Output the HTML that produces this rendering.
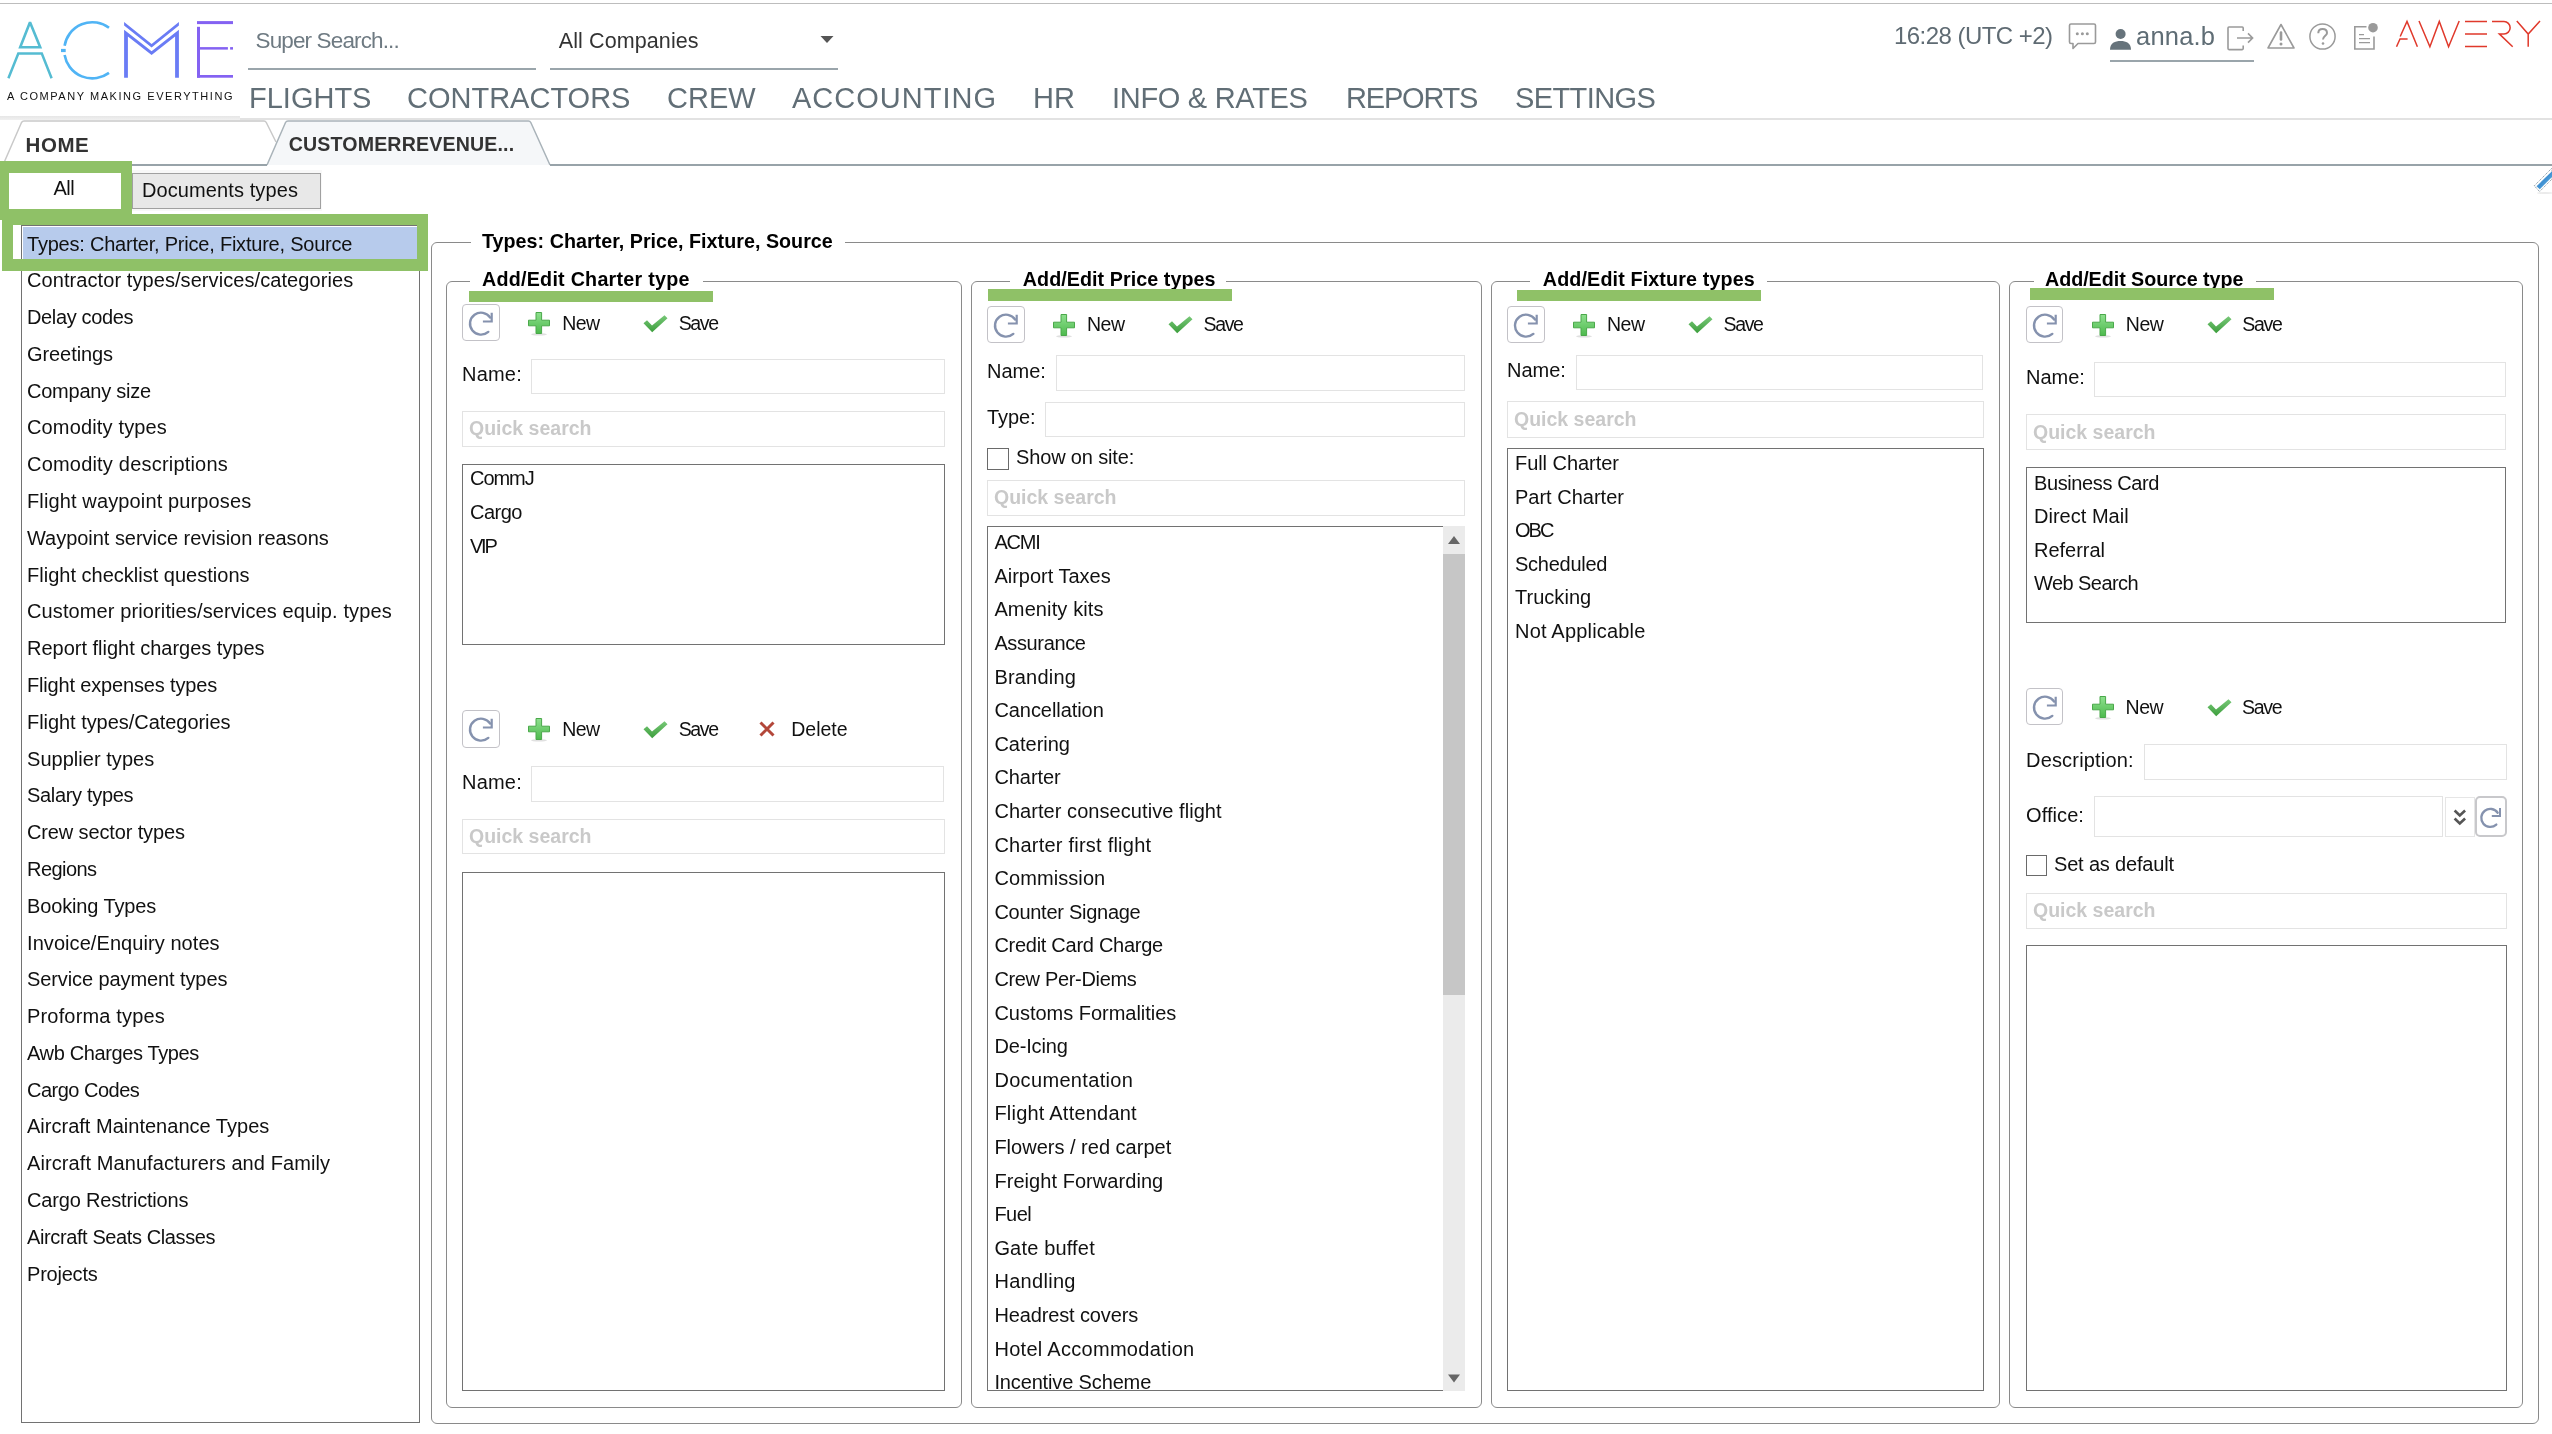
<!DOCTYPE html>
<html><head><meta charset="utf-8"><title>Types</title>
<style>
html,body{margin:0;padding:0;background:#fff;width:2552px;height:1434px;overflow:hidden;position:relative}
body{font-family:"Liberation Sans", sans-serif}
.a{position:absolute}
.t{position:absolute;line-height:1;white-space:nowrap}
body{-webkit-font-smoothing:antialiased}
</style></head><body><div id="root" style="position:absolute;left:0;top:0;width:2552px;height:1434px;will-change:transform">
<div class="a" style="left:0.0px;top:3.0px;width:2552.0px;height:1.0px;background:#bdbdbd"></div>
<svg class="a" style="left:0;top:0" width="240" height="120" viewBox="0 0 240 120">
<g fill="none" stroke-width="2.4" stroke-linecap="butt" stroke-linejoin="miter">
<path d="M30 22.3 L20.2 47.2 L40.2 47.2 Z" stroke="#55bcd2" stroke-width="2.6" stroke-miterlimit="1.85"/>
<path d="M8.4 78.3 L18.3 53.6 L41.8 53.6 L51.6 78.3" stroke="#55bcd2" stroke-width="2.5"/>
<path d="M109 27.7 A 28.1 28.1 0 0 0 64.6 45.8" stroke="#50b4f5" stroke-width="2.6"/>
<path d="M64.6 55 A 28.1 28.1 0 0 0 109 72.9" stroke="#50b4f5" stroke-width="2.6"/>

</g>
<rect x="61" y="48.9" width="4.7" height="3.2" fill="#50b4f5"/>
<path d="M124.1 21.9 L151.6 43.9 L178.9 21.9 L178.9 25.5 L151.6 47.4 L124.1 25.5 Z" fill="#6a7cf5"/>
<path d="M124.1 77.7 L124.1 29.7 L151.6 51.2 L178.9 29.7 L178.9 77.7 L175.1 77.7 L175.1 36.6 L151.6 55.1 L127.9 36.6 L127.9 77.7 Z" fill="#6a7cf5"/>
<rect x="197" y="21.1" width="36" height="3" fill="#8462f2"/>
<rect x="197" y="26.8" width="3" height="50.9" fill="#8462f2"/>
<rect x="197" y="47.1" width="30.9" height="2.5" fill="#8462f2"/>
<rect x="230.1" y="47.1" width="2.9" height="2.5" fill="#8462f2"/>
<rect x="197" y="75" width="36" height="2.7" fill="#8462f2"/>
</svg>
<div class="t" style="left:7.00px;top:90.9px;font-size:11px;font-weight:400;color:#111;letter-spacing:1.55px;">A COMPANY MAKING EVERYTHING</div>
<div class="a" style="left:0.0px;top:116.0px;width:240.0px;height:3.8px;background:linear-gradient(#e6e6e6,#f0f0f0)"></div>
<div class="t" style="left:255.50px;top:29.5px;font-size:22.5px;font-weight:400;color:#6e7a82;letter-spacing:-0.864px;">Super Search...</div>
<div class="a" style="left:248.0px;top:68.0px;width:288.0px;height:2.0px;background:#9aa5ab"></div>
<div class="t" style="left:558.80px;top:30.8px;font-size:21.5px;font-weight:400;color:#333;letter-spacing:0.100px;">All Companies</div>
<svg class="a" style="left:819px;top:35px" width="16" height="9"><path d="M1.5 1 L14.5 1 L8 8 Z" fill="#555"/></svg>
<div class="a" style="left:550.0px;top:68.0px;width:288.0px;height:2.0px;background:#9aa5ab"></div>
<div class="t" style="left:249.00px;top:83.8px;font-size:29px;font-weight:400;color:#616e76;letter-spacing:0px;">FLIGHTS</div>
<div class="t" style="left:407.00px;top:83.8px;font-size:29px;font-weight:400;color:#616e76;letter-spacing:0px;">CONTRACTORS</div>
<div class="t" style="left:667.00px;top:83.8px;font-size:29px;font-weight:400;color:#616e76;letter-spacing:0px;">CREW</div>
<div class="t" style="left:792.00px;top:83.8px;font-size:29px;font-weight:400;color:#616e76;letter-spacing:1.0px;">ACCOUNTING</div>
<div class="t" style="left:1033.00px;top:83.8px;font-size:29px;font-weight:400;color:#616e76;letter-spacing:0px;">HR</div>
<div class="t" style="left:1112.00px;top:83.8px;font-size:29px;font-weight:400;color:#616e76;letter-spacing:-0.3px;">INFO &amp; RATES</div>
<div class="t" style="left:1346.00px;top:83.8px;font-size:29px;font-weight:400;color:#616e76;letter-spacing:-1.2px;">REPORTS</div>
<div class="t" style="left:1515.00px;top:83.8px;font-size:29px;font-weight:400;color:#616e76;letter-spacing:-0.6px;">SETTINGS</div>
<div class="a" style="left:240.0px;top:118.0px;width:2312.0px;height:2.0px;background:#e2e2e2"></div>
<div class="t" style="left:1894.00px;top:24.2px;font-size:24px;font-weight:400;color:#5f6b73;letter-spacing:-0.538px;">16:28 (UTC +2)</div>
<svg class="a" style="left:2066px;top:20px" width="34" height="32" viewBox="0 0 34 32">
<path d="M5 4 H28 Q29.5 4 29.5 5.5 V22 Q29.5 23.5 28 23.5 H12 L7 28.5 V23.5 H5 Q3.5 23.5 3.5 22 V5.5 Q3.5 4 5 4 Z" fill="none" stroke="#9a9a9a" stroke-width="1.6" stroke-linejoin="round"/>
<circle cx="11.3" cy="13.8" r="1.5" fill="#9a9a9a"/><circle cx="16.4" cy="13.8" r="1.5" fill="#9a9a9a"/><circle cx="21.3" cy="13.8" r="1.5" fill="#9a9a9a"/>
</svg>
<svg class="a" style="left:2108px;top:22px" width="26" height="30" viewBox="0 0 26 30">
<circle cx="12.6" cy="12" r="5" fill="#66737b"/>
<path d="M2 27.8 C2 21 7 19 12.6 19 C18 19 23 21 23 27.8 Z" fill="#66737b"/>
</svg>
<div class="t" style="left:2136.00px;top:24.4px;font-size:25.5px;font-weight:400;color:#5f6d75;letter-spacing:0.200px;">anna.b</div>
<div class="a" style="left:2110.0px;top:60.0px;width:144.0px;height:2.0px;background:#9aa5ab"></div>
<svg class="a" style="left:2224px;top:22px" width="34" height="32" viewBox="0 0 34 32">
<path d="M19.2 9 V6 Q19.2 5 18.2 5 H5 Q4 5 4 6 V26.6 Q4 27.6 5 27.6 H18.2 Q19.2 27.6 19.2 26.6 V23.5" fill="none" stroke="#9a9a9a" stroke-width="1.6" stroke-linejoin="round"/>
<path d="M13 16 H28.6 M24 11.4 L28.6 16 L24 20.6" fill="none" stroke="#9a9a9a" stroke-width="1.6"/>
</svg>
<svg class="a" style="left:2265px;top:21px" width="32" height="30" viewBox="0 0 32 30">
<path d="M16 3.5 L29 27 H3 Z" fill="none" stroke="#9a9a9a" stroke-width="1.6" stroke-linejoin="round"/>
<path d="M16 11.5 V18.5" stroke="#9a9a9a" stroke-width="2.6" stroke-linecap="round"/>
<circle cx="16" cy="23" r="1.5" fill="#9a9a9a"/>
</svg>
<svg class="a" style="left:2306px;top:20px" width="34" height="34" viewBox="0 0 34 34">
<circle cx="16.5" cy="16.5" r="12.6" fill="none" stroke="#9a9a9a" stroke-width="1.5"/>
<path d="M12.3 13.3 C12.3 10.5 14.3 9 16.6 9 C19.2 9 21 10.6 21 12.9 C21 15.6 17 16 17 19.5" fill="none" stroke="#9a9a9a" stroke-width="2"/>
<circle cx="17" cy="23.5" r="1.3" fill="#9a9a9a"/>
</svg>
<svg class="a" style="left:2350px;top:20px" width="32" height="34" viewBox="0 0 32 34">
<path d="M16.5 6.8 H4.8 V29 H24 V16.5" fill="none" stroke="#9a9a9a" stroke-width="1.6"/>
<path d="M9 14.6 H14 M9 18.6 H20 M9 22.6 H20" stroke="#9a9a9a" stroke-width="1.3"/>
<circle cx="23" cy="7.7" r="4.8" fill="#9a9a9a"/>
</svg>
<svg class="a" style="left:2390px;top:15px" width="160" height="40" viewBox="2390 15 160 40">
<g fill="none" stroke="#e0392b" stroke-width="1.5">
<path d="M2400.2 36.5 L2407 21.5 L2417.4 46.7"/>
<path d="M2396.5 46.7 L2400 39 L2407.6 39"/>
<path d="M2419 21 L2429.9 46.7 L2439.3 21.5 L2448.6 46.7 L2459.2 21"/>
<path d="M2465 21.6 H2487 M2465 33.9 H2487 M2465 46.4 H2487"/>
<path d="M2492 21.6 H2504 A6.15 6.15 0 0 1 2504 33.9 H2499.3 L2512.7 46.7"/>
<path d="M2516.8 21 L2528.2 34 L2540 21 M2528.2 34 V46.7"/>
</g></svg>
<svg class="a" style="left:0;top:118px" width="2552" height="50" viewBox="0 118 2552 50">
<path d="M3 165 L21.5 122.5 Q22.5 121 24 121 L264 121 Q265.5 121 266.3 122.5 L276 142" fill="#fff" stroke="#c9c9c9" stroke-width="1.5"/>
<path d="M267 165 L285.5 122.5 Q286.3 121 288 121 L528.5 121 Q530 121 530.8 122.5 L550 165" fill="#f5f7f9" stroke="#a9b3b9" stroke-width="1.5"/>
<path d="M0 165 L267 165 M550 165 L2552 165" stroke="#98a3a9" stroke-width="2"/>
</svg>
<div class="t" style="left:25.60px;top:134.5px;font-size:20.5px;font-weight:700;color:#333;letter-spacing:0.567px;">HOME</div>
<div class="t" style="left:288.70px;top:135.4px;font-size:19.6px;font-weight:700;color:#333;letter-spacing:0.153px;">CUSTOMERREVENUE...</div>
<svg class="a" style="left:2530px;top:164px" width="22" height="32" viewBox="2530 164 22 32">
<defs><linearGradient id="pb" x1="0" y1="0" x2="1" y2="1"><stop offset="0" stop-color="#7cc8f0"/><stop offset="0.5" stop-color="#3f8fd0"/><stop offset="1" stop-color="#6cc0f0"/></linearGradient></defs>
<path d="M2534.3 185.8 L2552 168 L2552 179 L2539.6 191.6 Z" fill="#fff" stroke="#8a9aa2" stroke-width="1" stroke-dasharray="1.2 0.9"/>
<path d="M2536.5 186.2 L2552 171.3 L2552 177 L2539.8 189.3 Z" fill="url(#pb)"/>
<ellipse cx="2545" cy="193" rx="8" ry="1" fill="#ddd" opacity="0.6"/>
</svg>
<div class="a" style="left:132.0px;top:170.0px;width:190.0px;height:41.0px;background:#f8f8f8"></div>
<div class="a" style="left:132.0px;top:172.8px;width:188.5px;height:36.0px;background:#e8e8e8;border:1px solid #a0a0a0;box-sizing:border-box"></div>
<div class="t" style="left:142.00px;top:180.1px;font-size:20px;font-weight:400;color:#111;letter-spacing:0.100px;">Documents types</div>
<div class="a" style="left:9.0px;top:173.0px;width:111.3px;height:35.0px;background:#fff"></div>
<div class="t" style="left:53.40px;top:178.1px;font-size:20px;font-weight:400;color:#111;letter-spacing:-0.400px;">All</div>
<div class="a" style="left:21.0px;top:225.4px;width:399.0px;height:1197.6px;border:1.6px solid #727272;box-sizing:border-box;background:transparent"></div>
<div class="a" style="left:22.5px;top:227.0px;width:394.5px;height:32.0px;background:#b7cbec"></div>
<div class="t" style="left:27.00px;top:233.5px;font-size:20px;font-weight:400;color:#111;letter-spacing:-0.216px;">Types: Charter, Price, Fixture, Source</div>
<div class="t" style="left:27.00px;top:270.3px;font-size:20px;font-weight:400;color:#111;letter-spacing:0.077px;">Contractor types/services/categories</div>
<div class="t" style="left:27.00px;top:307.1px;font-size:20px;font-weight:400;color:#111;letter-spacing:-0.350px;">Delay codes</div>
<div class="t" style="left:27.00px;top:343.8px;font-size:20px;font-weight:400;color:#111;letter-spacing:-0.075px;">Greetings</div>
<div class="t" style="left:27.00px;top:380.6px;font-size:20px;font-weight:400;color:#111;letter-spacing:-0.227px;">Company size</div>
<div class="t" style="left:27.00px;top:417.4px;font-size:20px;font-weight:400;color:#111;letter-spacing:0.154px;">Comodity types</div>
<div class="t" style="left:27.00px;top:454.2px;font-size:20px;font-weight:400;color:#111;letter-spacing:0.200px;">Comodity descriptions</div>
<div class="t" style="left:27.00px;top:491.0px;font-size:20px;font-weight:400;color:#111;letter-spacing:0.130px;">Flight waypoint purposes</div>
<div class="t" style="left:27.00px;top:527.8px;font-size:20px;font-weight:400;color:#111;letter-spacing:-0.031px;">Waypoint service revision reasons</div>
<div class="t" style="left:27.00px;top:564.6px;font-size:20px;font-weight:400;color:#111;letter-spacing:0.008px;">Flight checklist questions</div>
<div class="t" style="left:27.00px;top:601.4px;font-size:20px;font-weight:400;color:#111;letter-spacing:0.113px;">Customer priorities/services equip. types</div>
<div class="t" style="left:27.00px;top:638.2px;font-size:20px;font-weight:400;color:#111;letter-spacing:-0.012px;">Report flight charges types</div>
<div class="t" style="left:27.00px;top:675.0px;font-size:20px;font-weight:400;color:#111;letter-spacing:-0.165px;">Flight expenses types</div>
<div class="t" style="left:27.00px;top:711.7px;font-size:20px;font-weight:400;color:#111;letter-spacing:-0.045px;">Flight types/Categories</div>
<div class="t" style="left:27.00px;top:748.5px;font-size:20px;font-weight:400;color:#111;letter-spacing:0.038px;">Supplier types</div>
<div class="t" style="left:27.00px;top:785.3px;font-size:20px;font-weight:400;color:#111;letter-spacing:-0.318px;">Salary types</div>
<div class="t" style="left:27.00px;top:822.1px;font-size:20px;font-weight:400;color:#111;letter-spacing:-0.131px;">Crew sector types</div>
<div class="t" style="left:27.00px;top:858.9px;font-size:20px;font-weight:400;color:#111;letter-spacing:-0.550px;">Regions</div>
<div class="t" style="left:27.00px;top:895.7px;font-size:20px;font-weight:400;color:#111;letter-spacing:-0.133px;">Booking Types</div>
<div class="t" style="left:27.00px;top:932.5px;font-size:20px;font-weight:400;color:#111;letter-spacing:0.070px;">Invoice/Enquiry notes</div>
<div class="t" style="left:27.00px;top:969.3px;font-size:20px;font-weight:400;color:#111;letter-spacing:-0.095px;">Service payment types</div>
<div class="t" style="left:27.00px;top:1006.1px;font-size:20px;font-weight:400;color:#111;letter-spacing:0.169px;">Proforma types</div>
<div class="t" style="left:27.00px;top:1042.8px;font-size:20px;font-weight:400;color:#111;letter-spacing:-0.369px;">Awb Charges Types</div>
<div class="t" style="left:27.00px;top:1079.6px;font-size:20px;font-weight:400;color:#111;letter-spacing:-0.510px;">Cargo Codes</div>
<div class="t" style="left:27.00px;top:1116.4px;font-size:20px;font-weight:400;color:#111;letter-spacing:0.012px;">Aircraft Maintenance Types</div>
<div class="t" style="left:27.00px;top:1153.2px;font-size:20px;font-weight:400;color:#111;letter-spacing:0.091px;">Aircraft Manufacturers and Family</div>
<div class="t" style="left:27.00px;top:1190.0px;font-size:20px;font-weight:400;color:#111;letter-spacing:-0.176px;">Cargo Restrictions</div>
<div class="t" style="left:27.00px;top:1226.8px;font-size:20px;font-weight:400;color:#111;letter-spacing:-0.390px;">Aircraft Seats Classes</div>
<div class="t" style="left:27.00px;top:1263.6px;font-size:20px;font-weight:400;color:#111;letter-spacing:-0.214px;">Projects</div>
<div class="a" style="left:0.0px;top:161.0px;width:132.0px;height:58.5px;border:solid #8fc167;border-width:12px 11.7px 11.5px 9px;box-sizing:border-box"></div>
<div class="a" style="left:2.4px;top:213.8px;width:425.6px;height:57.2px;border:solid #8fc167;border-width:11.3px 11px 12px 11.6px;box-sizing:border-box"></div>
<div class="a" style="left:0.0px;top:207.5px;width:9.0px;height:12.0px;background:#8fc167"></div>
<div class="a" style="left:430.5px;top:242.0px;width:2108.5px;height:1182.0px;border:1.4px solid #8a8a8a;border-radius:6px;box-sizing:border-box"></div>
<div class="a" style="left:470.5px;top:240.0px;width:374.1px;height:5.0px;background:#fff"></div>
<div class="t" style="left:482.00px;top:231.9px;font-size:19.7px;font-weight:700;color:#000;letter-spacing:0.027px;">Types: Charter, Price, Fixture, Source</div>
<div class="a" style="left:446.0px;top:280.8px;width:515.5px;height:1127.5px;border:1.4px solid #8a8a8a;border-radius:6px;box-sizing:border-box"></div>
<div class="a" style="left:470.0px;top:278.8px;width:233.0px;height:5.0px;background:#fff"></div>
<div class="t" style="left:482.00px;top:269.7px;font-size:19.7px;font-weight:700;color:#000;letter-spacing:0.250px;">Add/Edit Charter type</div>
<div class="a" style="left:469.2px;top:290.5px;width:243.8px;height:11.4px;background:#8fc167"></div>
<div class="a" style="left:462.2px;top:304.0px;width:37.5px;height:37.3px;border:1.5px solid #c3c2c7;border-radius:4px;box-sizing:border-box;background:#fff"></div>
<svg class="a" style="left:462.2px;top:304.0px" width="37.5" height="37.3" viewBox="0 0 37.5 37.3"><path d="M28.2 13.6 A 11 11 0 1 0 26.3 27.9" fill="none" stroke="#8592ae" stroke-width="2.4" stroke-linecap="round"/><path d="M20.9 17.5 H29.7 V8.7" fill="none" stroke="#8592ae" stroke-width="2.2"/></svg>
<svg class="a" style="left:528.2px;top:312.0px" width="24" height="24" viewBox="0 0 24 24">
<defs><linearGradient id="pg" x1="0" y1="0" x2="0" y2="1"><stop offset="0" stop-color="#8ee08e"/><stop offset="1" stop-color="#4dba4d"/></linearGradient></defs>
<ellipse cx="11" cy="22.3" rx="8" ry="1.2" fill="#ccc" opacity="0.6"/>
<path d="M8 0.5 H13.6 V8.2 H21.5 V13.8 H13.6 V21.5 H8 V13.8 H0.5 V8.2 H8 Z" fill="url(#pg)" stroke="#4aa84a" stroke-width="1"/>
</svg>
<div class="t" style="left:562.20px;top:313.7px;font-size:19.5px;font-weight:400;color:#111;letter-spacing:-0.500px;">New</div>
<svg class="a" style="left:643.2px;top:314.5px" width="26" height="20" viewBox="0 0 26 20">
<defs><linearGradient id="cg" x1="0" y1="0" x2="0" y2="1"><stop offset="0" stop-color="#78c878"/><stop offset="1" stop-color="#3c9e3c"/></linearGradient></defs>
<path d="M0.5 8.3 L4 5.3 L9 10.5 L21.5 0.3 L24.5 3.3 L9.2 17.3 Z" fill="url(#cg)"/>
</svg>
<div class="t" style="left:678.70px;top:313.7px;font-size:19.5px;font-weight:400;color:#111;letter-spacing:-1.333px;">Save</div>
<div class="t" style="left:462.00px;top:363.9px;font-size:20px;font-weight:400;color:#111;letter-spacing:0.200px;">Name:</div>
<div class="a" style="left:531.0px;top:358.5px;width:413.5px;height:35.5px;border:1.5px solid #e3e3e3;box-sizing:border-box;background:#fff"></div>
<div class="a" style="left:462.0px;top:411.0px;width:482.5px;height:35.5px;border:1.5px solid #e3e3e3;box-sizing:border-box;background:#fff"></div>
<div class="t" style="left:469.00px;top:419.2px;font-size:19.5px;font-weight:700;color:#c9c9c9;letter-spacing:0.000px;">Quick search</div>
<div class="a" style="left:462.0px;top:463.5px;width:482.5px;height:181.5px;border:1.6px solid #727272;box-sizing:border-box"></div>
<div class="t" style="left:470.00px;top:468.3px;font-size:20px;font-weight:400;color:#111;letter-spacing:-1.050px;">CommJ</div>
<div class="t" style="left:470.00px;top:502.2px;font-size:20px;font-weight:400;color:#111;letter-spacing:-0.500px;">Cargo</div>
<div class="t" style="left:470.00px;top:536.1px;font-size:20px;font-weight:400;color:#111;letter-spacing:-2.250px;">VIP</div>
<div class="a" style="left:462.2px;top:710.4px;width:37.5px;height:37.3px;border:1.5px solid #c3c2c7;border-radius:4px;box-sizing:border-box;background:#fff"></div>
<svg class="a" style="left:462.2px;top:710.4px" width="37.5" height="37.3" viewBox="0 0 37.5 37.3"><path d="M28.2 13.6 A 11 11 0 1 0 26.3 27.9" fill="none" stroke="#8592ae" stroke-width="2.4" stroke-linecap="round"/><path d="M20.9 17.5 H29.7 V8.7" fill="none" stroke="#8592ae" stroke-width="2.2"/></svg>
<svg class="a" style="left:528.2px;top:718.4px" width="24" height="24" viewBox="0 0 24 24">
<defs><linearGradient id="pg" x1="0" y1="0" x2="0" y2="1"><stop offset="0" stop-color="#8ee08e"/><stop offset="1" stop-color="#4dba4d"/></linearGradient></defs>
<ellipse cx="11" cy="22.3" rx="8" ry="1.2" fill="#ccc" opacity="0.6"/>
<path d="M8 0.5 H13.6 V8.2 H21.5 V13.8 H13.6 V21.5 H8 V13.8 H0.5 V8.2 H8 Z" fill="url(#pg)" stroke="#4aa84a" stroke-width="1"/>
</svg>
<div class="t" style="left:562.20px;top:720.1px;font-size:19.5px;font-weight:400;color:#111;letter-spacing:-0.500px;">New</div>
<svg class="a" style="left:643.2px;top:720.9px" width="26" height="20" viewBox="0 0 26 20">
<defs><linearGradient id="cg" x1="0" y1="0" x2="0" y2="1"><stop offset="0" stop-color="#78c878"/><stop offset="1" stop-color="#3c9e3c"/></linearGradient></defs>
<path d="M0.5 8.3 L4 5.3 L9 10.5 L21.5 0.3 L24.5 3.3 L9.2 17.3 Z" fill="url(#cg)"/>
</svg>
<div class="t" style="left:678.70px;top:720.1px;font-size:19.5px;font-weight:400;color:#111;letter-spacing:-1.333px;">Save</div>
<svg class="a" style="left:758.7px;top:721.4px" width="16" height="16" viewBox="0 0 16 16">
<path d="M1.5 1.5 L14.5 14.5 M14.5 1.5 L1.5 14.5" stroke="#b3473a" stroke-width="3"/>
</svg>
<div class="t" style="left:791.20px;top:720.1px;font-size:19.5px;font-weight:400;color:#111;letter-spacing:0.020px;">Delete</div>
<div class="t" style="left:462.00px;top:771.9px;font-size:20px;font-weight:400;color:#111;letter-spacing:0.200px;">Name:</div>
<div class="a" style="left:531.4px;top:766.4px;width:413.1px;height:35.6px;border:1.5px solid #e3e3e3;box-sizing:border-box;background:#fff"></div>
<div class="a" style="left:462.0px;top:819.3px;width:482.5px;height:35.1px;border:1.5px solid #e3e3e3;box-sizing:border-box;background:#fff"></div>
<div class="t" style="left:469.00px;top:827.3px;font-size:19.5px;font-weight:700;color:#c9c9c9;letter-spacing:0.000px;">Quick search</div>
<div class="a" style="left:462.0px;top:871.5px;width:482.5px;height:519.7px;border:1.6px solid #727272;box-sizing:border-box"></div>
<div class="a" style="left:970.5px;top:280.8px;width:511.0px;height:1127.5px;border:1.4px solid #8a8a8a;border-radius:6px;box-sizing:border-box"></div>
<div class="a" style="left:1010.0px;top:278.8px;width:216.0px;height:5.0px;background:#fff"></div>
<div class="t" style="left:1022.80px;top:269.7px;font-size:19.7px;font-weight:700;color:#000;letter-spacing:0.063px;">Add/Edit Price types</div>
<div class="a" style="left:988.0px;top:289.2px;width:243.6px;height:11.5px;background:#8fc167"></div>
<div class="a" style="left:987.0px;top:305.7px;width:37.5px;height:37.3px;border:1.5px solid #c3c2c7;border-radius:4px;box-sizing:border-box;background:#fff"></div>
<svg class="a" style="left:987.0px;top:305.7px" width="37.5" height="37.3" viewBox="0 0 37.5 37.3"><path d="M28.2 13.6 A 11 11 0 1 0 26.3 27.9" fill="none" stroke="#8592ae" stroke-width="2.4" stroke-linecap="round"/><path d="M20.9 17.5 H29.7 V8.7" fill="none" stroke="#8592ae" stroke-width="2.2"/></svg>
<svg class="a" style="left:1053.0px;top:313.7px" width="24" height="24" viewBox="0 0 24 24">
<defs><linearGradient id="pg" x1="0" y1="0" x2="0" y2="1"><stop offset="0" stop-color="#8ee08e"/><stop offset="1" stop-color="#4dba4d"/></linearGradient></defs>
<ellipse cx="11" cy="22.3" rx="8" ry="1.2" fill="#ccc" opacity="0.6"/>
<path d="M8 0.5 H13.6 V8.2 H21.5 V13.8 H13.6 V21.5 H8 V13.8 H0.5 V8.2 H8 Z" fill="url(#pg)" stroke="#4aa84a" stroke-width="1"/>
</svg>
<div class="t" style="left:1087.00px;top:315.4px;font-size:19.5px;font-weight:400;color:#111;letter-spacing:-0.500px;">New</div>
<svg class="a" style="left:1168.0px;top:316.2px" width="26" height="20" viewBox="0 0 26 20">
<defs><linearGradient id="cg" x1="0" y1="0" x2="0" y2="1"><stop offset="0" stop-color="#78c878"/><stop offset="1" stop-color="#3c9e3c"/></linearGradient></defs>
<path d="M0.5 8.3 L4 5.3 L9 10.5 L21.5 0.3 L24.5 3.3 L9.2 17.3 Z" fill="url(#cg)"/>
</svg>
<div class="t" style="left:1203.50px;top:315.4px;font-size:19.5px;font-weight:400;color:#111;letter-spacing:-1.333px;">Save</div>
<div class="t" style="left:987.00px;top:360.9px;font-size:20px;font-weight:400;color:#111;">Name:</div>
<div class="a" style="left:1056.0px;top:355.4px;width:408.6px;height:35.6px;border:1.5px solid #e3e3e3;box-sizing:border-box;background:#fff"></div>
<div class="t" style="left:987.00px;top:407.4px;font-size:20px;font-weight:400;color:#111;letter-spacing:-0.100px;">Type:</div>
<div class="a" style="left:1044.6px;top:401.9px;width:420.0px;height:35.6px;border:1.5px solid #e3e3e3;box-sizing:border-box;background:#fff"></div>
<div class="a" style="left:987.0px;top:448.0px;width:22.0px;height:21.6px;border:1.4px solid #6a6a6a;box-sizing:border-box;background:#fff"></div>
<div class="t" style="left:1016.00px;top:447.0px;font-size:20px;font-weight:400;color:#111;letter-spacing:-0.150px;">Show on site:</div>
<div class="a" style="left:987.0px;top:480.0px;width:477.6px;height:35.6px;border:1.5px solid #e3e3e3;box-sizing:border-box;background:#fff"></div>
<div class="t" style="left:994.00px;top:488.3px;font-size:19.5px;font-weight:700;color:#c9c9c9;letter-spacing:0.000px;">Quick search</div>
<div class="a" style="left:986.9px;top:526px;width:456.1px;height:865.2px;overflow:hidden;border:1.6px solid #727272;border-right:none;box-sizing:border-box">
<div class="t" style="left:6.50px;top:5.2px;font-size:20px;font-weight:400;color:#111;letter-spacing:-1.167px;">ACMI</div>
<div class="t" style="left:6.50px;top:38.8px;font-size:20px;font-weight:400;color:#111;letter-spacing:-0.008px;">Airport Taxes</div>
<div class="t" style="left:6.50px;top:72.4px;font-size:20px;font-weight:400;color:#111;letter-spacing:0.118px;">Amenity kits</div>
<div class="t" style="left:6.50px;top:106.0px;font-size:20px;font-weight:400;color:#111;letter-spacing:-0.375px;">Assurance</div>
<div class="t" style="left:6.50px;top:139.6px;font-size:20px;font-weight:400;color:#111;letter-spacing:0.200px;">Branding</div>
<div class="t" style="left:6.50px;top:173.2px;font-size:20px;font-weight:400;color:#111;letter-spacing:-0.064px;">Cancellation</div>
<div class="t" style="left:6.50px;top:206.8px;font-size:20px;font-weight:400;color:#111;letter-spacing:0.000px;">Catering</div>
<div class="t" style="left:6.50px;top:240.4px;font-size:20px;font-weight:400;color:#111;letter-spacing:-0.050px;">Charter</div>
<div class="t" style="left:6.50px;top:274.0px;font-size:20px;font-weight:400;color:#111;letter-spacing:0.060px;">Charter consecutive flight</div>
<div class="t" style="left:6.50px;top:307.6px;font-size:20px;font-weight:400;color:#111;letter-spacing:0.232px;">Charter first flight</div>
<div class="t" style="left:6.50px;top:341.2px;font-size:20px;font-weight:400;color:#111;letter-spacing:0.089px;">Commission</div>
<div class="t" style="left:6.50px;top:374.8px;font-size:20px;font-weight:400;color:#111;letter-spacing:-0.271px;">Counter Signage</div>
<div class="t" style="left:6.50px;top:408.4px;font-size:20px;font-weight:400;color:#111;letter-spacing:-0.276px;">Credit Card Charge</div>
<div class="t" style="left:6.50px;top:442.0px;font-size:20px;font-weight:400;color:#111;letter-spacing:-0.331px;">Crew Per-Diems</div>
<div class="t" style="left:6.50px;top:475.6px;font-size:20px;font-weight:400;color:#111;letter-spacing:-0.017px;">Customs Formalities</div>
<div class="t" style="left:6.50px;top:509.2px;font-size:20px;font-weight:400;color:#111;letter-spacing:-0.157px;">De-Icing</div>
<div class="t" style="left:6.50px;top:542.8px;font-size:20px;font-weight:400;color:#111;letter-spacing:0.333px;">Documentation</div>
<div class="t" style="left:6.50px;top:576.4px;font-size:20px;font-weight:400;color:#111;letter-spacing:0.220px;">Flight Attendant</div>
<div class="t" style="left:6.50px;top:610.0px;font-size:20px;font-weight:400;color:#111;letter-spacing:0.005px;">Flowers / red carpet</div>
<div class="t" style="left:6.50px;top:643.6px;font-size:20px;font-weight:400;color:#111;letter-spacing:0.059px;">Freight Forwarding</div>
<div class="t" style="left:6.50px;top:677.2px;font-size:20px;font-weight:400;color:#111;letter-spacing:-0.533px;">Fuel</div>
<div class="t" style="left:6.50px;top:710.8px;font-size:20px;font-weight:400;color:#111;letter-spacing:0.170px;">Gate buffet</div>
<div class="t" style="left:6.50px;top:744.4px;font-size:20px;font-weight:400;color:#111;letter-spacing:0.300px;">Handling</div>
<div class="t" style="left:6.50px;top:778.0px;font-size:20px;font-weight:400;color:#111;letter-spacing:-0.129px;">Headrest covers</div>
<div class="t" style="left:6.50px;top:811.6px;font-size:20px;font-weight:400;color:#111;letter-spacing:0.294px;">Hotel Accommodation</div>
<div class="t" style="left:6.50px;top:845.2px;font-size:20px;font-weight:400;color:#111;letter-spacing:-0.140px;">Incentive Scheme</div>
</div>
<div class="a" style="left:1443.0px;top:526.0px;width:22.0px;height:865.0px;background:#ebebeb"></div>
<div class="a" style="left:1443.0px;top:554.0px;width:22.0px;height:441.0px;background:#c6c6c6"></div>
<svg class="a" style="left:1443px;top:526px" width="22" height="28"><path d="M5 17.9 L17 17.9 L11 9.9 Z" fill="#666"/></svg>
<svg class="a" style="left:1443px;top:1365px" width="22" height="26"><path d="M5 9.6 L17 9.6 L11 17.5 Z" fill="#666"/></svg>
<div class="a" style="left:1490.6px;top:280.8px;width:509.4px;height:1127.5px;border:1.4px solid #8a8a8a;border-radius:6px;box-sizing:border-box"></div>
<div class="a" style="left:1530.0px;top:278.8px;width:237.0px;height:5.0px;background:#fff"></div>
<div class="t" style="left:1542.80px;top:269.7px;font-size:19.7px;font-weight:700;color:#000;letter-spacing:0.143px;">Add/Edit Fixture types</div>
<div class="a" style="left:1517.4px;top:289.6px;width:243.6px;height:11.7px;background:#8fc167"></div>
<div class="a" style="left:1507.0px;top:305.5px;width:37.5px;height:37.3px;border:1.5px solid #c3c2c7;border-radius:4px;box-sizing:border-box;background:#fff"></div>
<svg class="a" style="left:1507.0px;top:305.5px" width="37.5" height="37.3" viewBox="0 0 37.5 37.3"><path d="M28.2 13.6 A 11 11 0 1 0 26.3 27.9" fill="none" stroke="#8592ae" stroke-width="2.4" stroke-linecap="round"/><path d="M20.9 17.5 H29.7 V8.7" fill="none" stroke="#8592ae" stroke-width="2.2"/></svg>
<svg class="a" style="left:1573.0px;top:313.5px" width="24" height="24" viewBox="0 0 24 24">
<defs><linearGradient id="pg" x1="0" y1="0" x2="0" y2="1"><stop offset="0" stop-color="#8ee08e"/><stop offset="1" stop-color="#4dba4d"/></linearGradient></defs>
<ellipse cx="11" cy="22.3" rx="8" ry="1.2" fill="#ccc" opacity="0.6"/>
<path d="M8 0.5 H13.6 V8.2 H21.5 V13.8 H13.6 V21.5 H8 V13.8 H0.5 V8.2 H8 Z" fill="url(#pg)" stroke="#4aa84a" stroke-width="1"/>
</svg>
<div class="t" style="left:1607.00px;top:315.2px;font-size:19.5px;font-weight:400;color:#111;letter-spacing:-0.500px;">New</div>
<svg class="a" style="left:1688.0px;top:316.0px" width="26" height="20" viewBox="0 0 26 20">
<defs><linearGradient id="cg" x1="0" y1="0" x2="0" y2="1"><stop offset="0" stop-color="#78c878"/><stop offset="1" stop-color="#3c9e3c"/></linearGradient></defs>
<path d="M0.5 8.3 L4 5.3 L9 10.5 L21.5 0.3 L24.5 3.3 L9.2 17.3 Z" fill="url(#cg)"/>
</svg>
<div class="t" style="left:1723.50px;top:315.2px;font-size:19.5px;font-weight:400;color:#111;letter-spacing:-1.333px;">Save</div>
<div class="t" style="left:1507.00px;top:360.3px;font-size:20px;font-weight:400;color:#111;">Name:</div>
<div class="a" style="left:1575.7px;top:354.8px;width:407.8px;height:35.7px;border:1.5px solid #e3e3e3;box-sizing:border-box;background:#fff"></div>
<div class="a" style="left:1507.0px;top:401.4px;width:476.5px;height:36.3px;border:1.5px solid #e3e3e3;box-sizing:border-box;background:#fff"></div>
<div class="t" style="left:1514.00px;top:410.0px;font-size:19.5px;font-weight:700;color:#c9c9c9;letter-spacing:0.000px;">Quick search</div>
<div class="a" style="left:1507.0px;top:447.7px;width:476.5px;height:943.5px;border:1.6px solid #727272;box-sizing:border-box"></div>
<div class="t" style="left:1515.00px;top:452.9px;font-size:20px;font-weight:400;color:#111;letter-spacing:-0.055px;">Full Charter</div>
<div class="t" style="left:1515.00px;top:486.5px;font-size:20px;font-weight:400;color:#111;letter-spacing:0.000px;">Part Charter</div>
<div class="t" style="left:1515.00px;top:520.2px;font-size:20px;font-weight:400;color:#111;letter-spacing:-2.000px;">OBC</div>
<div class="t" style="left:1515.00px;top:553.8px;font-size:20px;font-weight:400;color:#111;letter-spacing:-0.262px;">Scheduled</div>
<div class="t" style="left:1515.00px;top:587.4px;font-size:20px;font-weight:400;color:#111;letter-spacing:0.029px;">Trucking</div>
<div class="t" style="left:1515.00px;top:621.1px;font-size:20px;font-weight:400;color:#111;letter-spacing:0.192px;">Not Applicable</div>
<div class="a" style="left:2009.4px;top:280.8px;width:513.6px;height:1127.5px;border:1.4px solid #8a8a8a;border-radius:6px;box-sizing:border-box"></div>
<div class="a" style="left:2033.5px;top:278.8px;width:222.5px;height:5.0px;background:#fff"></div>
<div class="t" style="left:2045.00px;top:269.7px;font-size:19.7px;font-weight:700;color:#000;letter-spacing:-0.032px;">Add/Edit Source type</div>
<div class="a" style="left:2030.0px;top:288.2px;width:243.5px;height:11.5px;background:#8fc167"></div>
<div class="a" style="left:2025.8px;top:305.6px;width:37.5px;height:37.3px;border:1.5px solid #c3c2c7;border-radius:4px;box-sizing:border-box;background:#fff"></div>
<svg class="a" style="left:2025.8px;top:305.6px" width="37.5" height="37.3" viewBox="0 0 37.5 37.3"><path d="M28.2 13.6 A 11 11 0 1 0 26.3 27.9" fill="none" stroke="#8592ae" stroke-width="2.4" stroke-linecap="round"/><path d="M20.9 17.5 H29.7 V8.7" fill="none" stroke="#8592ae" stroke-width="2.2"/></svg>
<svg class="a" style="left:2091.8px;top:313.6px" width="24" height="24" viewBox="0 0 24 24">
<defs><linearGradient id="pg" x1="0" y1="0" x2="0" y2="1"><stop offset="0" stop-color="#8ee08e"/><stop offset="1" stop-color="#4dba4d"/></linearGradient></defs>
<ellipse cx="11" cy="22.3" rx="8" ry="1.2" fill="#ccc" opacity="0.6"/>
<path d="M8 0.5 H13.6 V8.2 H21.5 V13.8 H13.6 V21.5 H8 V13.8 H0.5 V8.2 H8 Z" fill="url(#pg)" stroke="#4aa84a" stroke-width="1"/>
</svg>
<div class="t" style="left:2125.80px;top:315.3px;font-size:19.5px;font-weight:400;color:#111;letter-spacing:-0.500px;">New</div>
<svg class="a" style="left:2206.8px;top:316.1px" width="26" height="20" viewBox="0 0 26 20">
<defs><linearGradient id="cg" x1="0" y1="0" x2="0" y2="1"><stop offset="0" stop-color="#78c878"/><stop offset="1" stop-color="#3c9e3c"/></linearGradient></defs>
<path d="M0.5 8.3 L4 5.3 L9 10.5 L21.5 0.3 L24.5 3.3 L9.2 17.3 Z" fill="url(#cg)"/>
</svg>
<div class="t" style="left:2242.30px;top:315.3px;font-size:19.5px;font-weight:400;color:#111;letter-spacing:-1.333px;">Save</div>
<div class="t" style="left:2026.00px;top:366.9px;font-size:20px;font-weight:400;color:#111;">Name:</div>
<div class="a" style="left:2094.4px;top:361.5px;width:411.6px;height:35.5px;border:1.5px solid #e3e3e3;box-sizing:border-box;background:#fff"></div>
<div class="a" style="left:2026.0px;top:414.4px;width:480.0px;height:35.9px;border:1.5px solid #e3e3e3;box-sizing:border-box;background:#fff"></div>
<div class="t" style="left:2033.00px;top:422.8px;font-size:19.5px;font-weight:700;color:#c9c9c9;letter-spacing:0.000px;">Quick search</div>
<div class="a" style="left:2026.0px;top:467.0px;width:480.0px;height:156.0px;border:1.6px solid #727272;box-sizing:border-box"></div>
<div class="t" style="left:2034.00px;top:472.9px;font-size:20px;font-weight:400;color:#111;letter-spacing:-0.383px;">Business Card</div>
<div class="t" style="left:2034.00px;top:506.3px;font-size:20px;font-weight:400;color:#111;letter-spacing:0.020px;">Direct Mail</div>
<div class="t" style="left:2034.00px;top:539.8px;font-size:20px;font-weight:400;color:#111;letter-spacing:-0.029px;">Referral</div>
<div class="t" style="left:2034.00px;top:573.3px;font-size:20px;font-weight:400;color:#111;letter-spacing:-0.567px;">Web Search</div>
<div class="a" style="left:2025.6px;top:688.0px;width:37.5px;height:37.3px;border:1.5px solid #c3c2c7;border-radius:4px;box-sizing:border-box;background:#fff"></div>
<svg class="a" style="left:2025.6px;top:688.0px" width="37.5" height="37.3" viewBox="0 0 37.5 37.3"><path d="M28.2 13.6 A 11 11 0 1 0 26.3 27.9" fill="none" stroke="#8592ae" stroke-width="2.4" stroke-linecap="round"/><path d="M20.9 17.5 H29.7 V8.7" fill="none" stroke="#8592ae" stroke-width="2.2"/></svg>
<svg class="a" style="left:2091.6px;top:696.0px" width="24" height="24" viewBox="0 0 24 24">
<defs><linearGradient id="pg" x1="0" y1="0" x2="0" y2="1"><stop offset="0" stop-color="#8ee08e"/><stop offset="1" stop-color="#4dba4d"/></linearGradient></defs>
<ellipse cx="11" cy="22.3" rx="8" ry="1.2" fill="#ccc" opacity="0.6"/>
<path d="M8 0.5 H13.6 V8.2 H21.5 V13.8 H13.6 V21.5 H8 V13.8 H0.5 V8.2 H8 Z" fill="url(#pg)" stroke="#4aa84a" stroke-width="1"/>
</svg>
<div class="t" style="left:2125.60px;top:697.7px;font-size:19.5px;font-weight:400;color:#111;letter-spacing:-0.500px;">New</div>
<svg class="a" style="left:2206.6px;top:698.5px" width="26" height="20" viewBox="0 0 26 20">
<defs><linearGradient id="cg" x1="0" y1="0" x2="0" y2="1"><stop offset="0" stop-color="#78c878"/><stop offset="1" stop-color="#3c9e3c"/></linearGradient></defs>
<path d="M0.5 8.3 L4 5.3 L9 10.5 L21.5 0.3 L24.5 3.3 L9.2 17.3 Z" fill="url(#cg)"/>
</svg>
<div class="t" style="left:2242.10px;top:697.7px;font-size:19.5px;font-weight:400;color:#111;letter-spacing:-1.333px;">Save</div>
<div class="t" style="left:2026.00px;top:749.6px;font-size:20px;font-weight:400;color:#111;letter-spacing:0.182px;">Description:</div>
<div class="a" style="left:2144.0px;top:744.0px;width:362.7px;height:35.8px;border:1.5px solid #e3e3e3;box-sizing:border-box;background:#fff"></div>
<div class="t" style="left:2026.00px;top:804.8px;font-size:20px;font-weight:400;color:#111;letter-spacing:0.083px;">Office:</div>
<div class="a" style="left:2094.4px;top:796.3px;width:349.1px;height:41.1px;border:1.5px solid #e3e3e3;box-sizing:border-box;background:#fff"></div>
<div class="a" style="left:2445.4px;top:797.0px;width:29.5px;height:40.4px;border:1.5px solid #e6e6e6;box-sizing:border-box"></div>
<svg class="a" style="left:2445.7px;top:797px" width="29" height="40"><path d="M8.6 13.5 L13.8 18.5 L19.1 13.5 M8.6 21.5 L13.8 26.5 L19.1 21.5" fill="none" stroke="#555" stroke-width="2.6"/></svg>
<div class="a" style="left:2475.3px;top:796.3px;width:32.0px;height:41.1px;border:2px solid #c8c8cb;border-radius:5px;box-sizing:border-box;background:#fff"></div>
<svg class="a" style="left:2475.3px;top:796.3px" width="32" height="42"><path d="M22.67 16.74 A 9 9 0 1 0 21.32 28.59" fill="none" stroke="#8592ae" stroke-width="2.3" stroke-linecap="round"/><path d="M16.8 20.1 H25 V11.9" fill="none" stroke="#8592ae" stroke-width="2"/></svg>
<div class="a" style="left:2026.0px;top:854.5px;width:20.7px;height:21.3px;border:1.4px solid #6a6a6a;box-sizing:border-box;background:#fff"></div>
<div class="t" style="left:2054.00px;top:853.7px;font-size:20px;font-weight:400;color:#111;letter-spacing:-0.169px;">Set as default</div>
<div class="a" style="left:2026.0px;top:892.9px;width:480.7px;height:35.8px;border:1.5px solid #e3e3e3;box-sizing:border-box;background:#fff"></div>
<div class="t" style="left:2033.00px;top:901.3px;font-size:19.5px;font-weight:700;color:#c9c9c9;letter-spacing:0.000px;">Quick search</div>
<div class="a" style="left:2026.0px;top:945.3px;width:480.7px;height:445.9px;border:1.6px solid #727272;box-sizing:border-box"></div>
</div></body></html>
